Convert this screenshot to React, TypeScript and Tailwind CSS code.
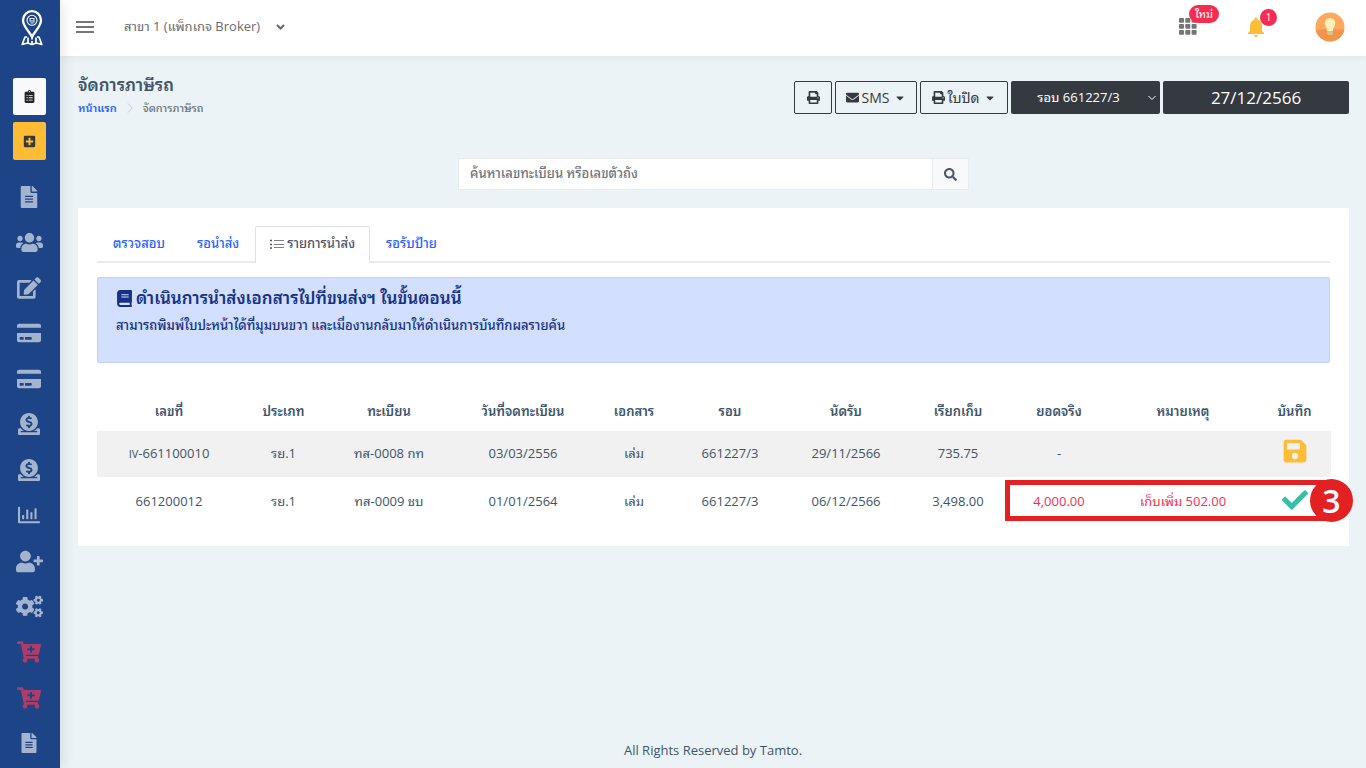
import React from 'react';
import {
  FaFileAlt, FaUsers, FaEdit, FaCreditCard, FaDonate, FaRegChartBar, FaUserPlus, FaCogs, FaCartPlus,
  FaClipboardList, FaPlusSquare, FaPrint, FaEnvelope, FaSearch, FaBook, FaSave, FaCheck, FaCaretDown,
} from 'react-icons/fa';
import { MdNotifications } from 'react-icons/md';

const navItems = [
  { label: 'เอกสาร', Icon: FaFileAlt, size: 22 },
  { label: 'ลูกค้า', Icon: FaUsers, size: 27 },
  { label: 'แก้ไข', Icon: FaEdit, size: 24 },
  { label: 'ชำระเงิน', Icon: FaCreditCard, size: 24 },
  { label: 'บัตร', Icon: FaCreditCard, size: 24 },
  { label: 'รายรับ', Icon: FaDonate, size: 22 },
  { label: 'รายจ่าย', Icon: FaDonate, size: 22 },
  { label: 'สถิติ', Icon: FaRegChartBar, size: 22 },
  { label: 'เพิ่มผู้ใช้', Icon: FaUserPlus, size: 27 },
  { label: 'ตั้งค่า', Icon: FaCogs, size: 27 },
  { label: 'ซื้อแพ็กเกจ', Icon: FaCartPlus, size: 24, danger: true },
  { label: 'ซื้อเพิ่ม', Icon: FaCartPlus, size: 24, danger: true },
  { label: 'รายงาน', Icon: FaFileAlt, size: 20 },
];

const columns = [
  { title: 'เลขที่', width: 'w-[144px]' },
  { title: 'ประเภท', width: 'w-[85px]' },
  { title: 'ทะเบียน', width: 'w-[126px]' },
  { title: 'วันที่จดทะเบียน', width: 'w-[142px]' },
  { title: 'เอกสาร', width: 'w-[80px]' },
  { title: 'รอบ', width: 'w-[112px]' },
  { title: 'นัดรับ', width: 'w-[120px]' },
  { title: 'เรียกเก็บ', width: 'w-[104px]' },
  { title: 'ยอดจริง', width: 'w-[98px]' },
  { title: 'หมายเหตุ', width: 'w-[150px]' },
  { title: 'บันทึก', width: 'w-[73px]' },
];

function Logo() {
  return (
    <svg width="22" height="36" viewBox="0 0 22 36" fill="none" stroke="#fff" strokeWidth="2.300" strokeLinejoin="round" aria-hidden="true">
      <path d="M11 27C8.500 21.500 2 16.500 2 10.200a9 9 0 0 1 18 0C20 16.500 13.500 21.500 11 27Z" />
      <circle cx="11" cy="10.300" r="5" strokeWidth="1.100" />
      <path d="M8.500 8.500h5M9 11h4M9.500 13h3M9 8.500v3M13 8.500v4" strokeWidth="0.900" />
      <path d="M6 27H4L1.200 34.500l5.300-1.500 4.500 1.500 4.500-1.500 5.300 1.500L18 27h-2" strokeWidth="1.700" />
      <path d="M7 27.500V33M15 27.500V33M11 27v2.500M11 31v3" strokeWidth="1.700" />
    </svg>
  );
}

function Avatar() {
  return (
    <svg width="30" height="30" viewBox="0 0 30 30" aria-hidden="true">
      <clipPath id="avatar-clip"><circle cx="15" cy="15" r="14.500" /></clipPath>
      <g clipPath="url(#avatar-clip)">
        <rect width="30" height="30" fill="#ffa75c" />
        <rect y="17.500" width="30" height="13" fill="#f2954c" />
        <path d="M15 6a5.300 5.300 0 0 0-5.300 5.300c0 3 2.500 4.500 2.500 7.700h5.600c0-3.200 2.500-4.700 2.500-7.700A5.300 5.300 0 0 0 15 6Z" fill="#fdf0b8" />
        <rect x="12.200" y="19" width="5.600" height="4" rx="0.800" fill="#ddc383" />
      </g>
    </svg>
  );
}

function Sidebar() {
  return (
    <aside className="z-10 flex w-[60px] shrink-0 flex-col items-center bg-[#1c4487] pr-[2px] pb-[2px] shadow-[1px_0_14px_rgba(0,0,0,0.12)]">
      <a href="#home" aria-label="Tamto" className="mt-[10px] ml-[5px] flex h-9 items-center"><Logo /></a>
      <a href="#tasks" aria-label="รายการงาน" className="mt-8 flex h-[37px] w-[33px] items-center justify-center rounded-xs bg-[#f8f9fa] text-[#212529]">
        <FaClipboardList size={13} />
      </a>
      <a href="#new" aria-label="เพิ่มรายการ" className="mt-[7px] flex h-[38px] w-[33px] items-center justify-center rounded-xs bg-[#ffbc34] text-[#343a40]">
        <FaPlusSquare size={13} />
      </a>
      <nav className="mt-[14px] flex w-full flex-1 flex-col">
        {navItems.map(({ label, Icon, size, danger }) => (
          <a key={label} href="#menu" aria-label={label} className={`flex min-h-10 flex-1 items-center justify-center ${danger ? 'text-[#ad3c68]' : 'text-[#a4b4cf]'}`}>
            <Icon size={size} />
          </a>
        ))}
      </nav>
    </aside>
  );
}

function TopBar() {
  return (
    <header className="flex h-14 items-center bg-white pr-[21px] pb-[3px] pl-4 text-[#6b6b6b] shadow-[0_1px_8px_rgba(0,0,0,0.06)]">
      <button type="button" aria-label="เมนู" className="flex w-[18px] flex-col gap-[3px]">
        <span className="h-[2px] w-full bg-[#757575]" />
        <span className="h-[2px] w-full bg-[#757575]" />
        <span className="h-[2px] w-full bg-[#757575]" />
      </button>
      <button type="button" className="ml-[30px] flex items-center gap-4 text-[13px]">
        สาขา 1 (แพ็กเกจ Broker)
        <svg width="9" height="6" viewBox="0 0 9 6" fill="none" stroke="#666" strokeWidth="2" aria-hidden="true"><path d="M1 1l3.500 3.500L8 1" /></svg>
      </button>
      <div className="ml-auto flex items-center">
        <button type="button" aria-label="แอป ใหม่" className="relative mr-[47px]">
          <svg width="18" height="17" viewBox="0 0 18 17" fill="#757575" aria-hidden="true">
            {[0, 6, 12].map((y) => [0, 6.3, 12.6].map((x) => <rect key={`${x}-${y}`} x={x} y={y} width="5" height="4.800" rx="0.800" />))}
          </svg>
          <span className="absolute -top-[13px] left-[10px] flex h-[18px] w-[30px] items-center justify-center rounded-full bg-[#f62d51] text-[11px] text-white">ใหม่</span>
        </button>
        <button type="button" aria-label="การแจ้งเตือน 1" className="relative mr-[47px] text-[#ffbc34]">
          <MdNotifications size={24} />
          <span className="absolute -top-[6px] left-4 flex size-[17px] items-center justify-center rounded-full bg-[#f62d51] text-[10px] text-white">1</span>
        </button>
        <button type="button" aria-label="บัญชีผู้ใช้"><Avatar /></button>
      </div>
    </header>
  );
}

const outlineButton = 'flex h-[33px] items-center justify-center gap-[3px] rounded-xs border border-[#343a40]';

function PageHeading() {
  return (
    <div className="flex items-start justify-between">
      <div>
        <h1 className="text-[17px] leading-6 font-semibold text-[#3e5569]">จัดการภาษีรถ</h1>
        <nav aria-label="breadcrumb" className="mt-px flex items-center gap-[10px] text-[11px] leading-5 font-medium text-[#6c757d]">
          <a href="#home" className="font-semibold text-[#2962ff]">หน้าแรก</a>
          <svg width="6" height="10" viewBox="0 0 6 10" fill="none" stroke="#c3cbd3" aria-hidden="true"><path d="M1 .5L5.200 5 1 9.500" /></svg>
          <span>จัดการภาษีรถ</span>
        </nav>
      </div>
      <div className="mt-[8px] flex gap-[3px] text-sm text-[#343a40]">
        <button type="button" aria-label="พิมพ์" className={`${outlineButton} w-[38px]`}><FaPrint size={13} /></button>
        <button type="button" className={`${outlineButton} w-[82px]`}>
          <FaEnvelope size={13} />SMS<FaCaretDown size={12} className="ml-[2px]" />
        </button>
        <button type="button" className={`${outlineButton} w-[88px]`}>
          <FaPrint size={13} />ใบปิด<FaCaretDown size={12} className="ml-[2px]" />
        </button>
        <div className="relative">
          <select aria-label="รอบ" className="h-[33px] w-[149px] appearance-none rounded-xs bg-[#343a40] pr-[14px] text-center text-[13px] text-white">
            <option>รอบ 661227/3</option>
          </select>
          <svg className="pointer-events-none absolute top-[14px] right-1" width="8" height="6" viewBox="0 0 8 6" fill="none" stroke="#fff" aria-hidden="true"><path d="M.5 1L4 4.500 7.500 1" /></svg>
        </div>
        <input aria-label="วันที่" defaultValue="27/12/2566" className="h-[33px] w-[186px] rounded-xs bg-[#343a40] text-center text-[17px] text-white" />
      </div>
    </div>
  );
}

const tabClass = 'px-4 text-[13px] font-medium text-[#2962ff]';

function Tabs() {
  return (
    <div role="tablist" className="flex h-[37px] items-stretch border-b-2 border-[#e9ecef]">
      <button type="button" role="tab" aria-selected="false" className={tabClass}>ตรวจสอบ</button>
      <button type="button" role="tab" aria-selected="false" className={tabClass}>รอนำส่ง</button>
      <button type="button" role="tab" aria-selected="true" className="-mb-[2px] flex items-center gap-[3px] rounded-t-xs border border-b-0 border-[#dee2e6] bg-white px-[14px] pb-[2px] text-[13px] font-medium text-[#4f5467]">
        <svg width="14" height="10" viewBox="0 0 14 10" stroke="#7c8090" aria-hidden="true">
          <path d="M0 1.500h2M0 5.500h2M0 9h2" strokeWidth="1.600" stroke="#4f5467" /><path d="M4 1.500h10M4 5.500h10M4 8.500h10" />
        </svg>
        รายการนำส่ง
      </button>
      <button type="button" role="tab" aria-selected="false" className={tabClass}>รอรับป้าย</button>
    </div>
  );
}

function DeliveryTable() {
  return (
    <div className="relative mt-[30px]">
      <table className="w-full table-fixed text-center text-[13px] text-[#3e5569]">
        <thead>
          <tr className="h-[38px]">
            {columns.map((c) => <th key={c.title} className={`${c.width} font-semibold`}>{c.title}</th>)}
          </tr>
        </thead>
        <tbody>
          <tr className="h-[46px] bg-[#f1f1f1]">
            <td><span className="text-[11px]">IV</span>-661100010</td>
            <td>รย.1</td><td>ทส-0008 กท</td><td>03/03/2556</td><td>เล่ม</td><td>661227/3</td><td>29/11/2566</td><td>735.75</td><td>-</td><td />
            <td><button type="button" aria-label="บันทึก" className="-mt-2 align-middle text-[#ffbc34]"><FaSave size={26} /></button></td>
          </tr>
          <tr className="h-[50px]">
            <td>661200012</td>
            <td>รย.1</td><td>ทส-0009 ชบ</td><td>01/01/2564</td><td>เล่ม</td><td>661227/3</td><td>06/12/2566</td><td>3,498.00</td>
            <td className="text-[#f62d51]">4,000.00</td>
            <td className="text-[#f62d51]">เก็บเพิ่ม 502.00</td>
            <td className="text-[#36bea6]"><FaCheck size={26} className="mx-auto -mt-1" role="img" aria-label="บันทึกแล้ว" /></td>
          </tr>
        </tbody>
      </table>
      <div className="absolute right-0 bottom-[6px] h-[41px] w-[325px] border-[5px] border-r-0 border-[#e32123]" />
      <div className="absolute -right-[23px] bottom-[5px] flex size-[43px] items-center justify-center rounded-full bg-[#e32123] text-[32px] leading-none font-semibold text-white">3</div>
    </div>
  );
}

export default function App() {
  return (
    <div className="flex min-h-screen bg-[#ecf3f7] font-['Open_Sans','Noto_Sans_Thai_Looped','Loma','Noto_Sans_Thai',sans-serif]">
      <Sidebar />
      <div className="flex min-w-0 flex-1 flex-col">
        <TopBar />
        <main className="flex-1 pt-[17px] pr-[17px] pl-[18px]">
          <PageHeading />
          <form className="mx-auto mt-10 flex h-8 w-[511px] border border-[#e9ecef]" onSubmit={(e) => e.preventDefault()}>
            <input aria-label="ค้นหา" placeholder="ค้นหาเลขทะเบียน หรือเลขตัวถัง" className="min-w-0 flex-1 bg-white px-[11px] text-[13px] font-medium placeholder:text-[#6c757d]" />
            <button type="submit" aria-label="ค้นหา" className="flex w-9 items-center justify-center border-l border-[#e9ecef] bg-[#f8f9fa] text-[#4f5467]"><FaSearch size={13} /></button>
          </form>
          <section className="mt-[18px] bg-white px-[19px] pt-[18px] pb-[19px]">
            <Tabs />
            <div className="mt-[14px] h-[86px] rounded-xs border border-[#bfd0ff] bg-[#d2dffe] px-[18px] pt-2 text-[#153285]">
              <h2 className="flex items-center gap-[3px] text-[17px] leading-6 font-semibold"><FaBook size={17} />ดำเนินการนำส่งเอกสารไปที่ขนส่งฯ ในขั้นตอนนี้</h2>
              <p className="mt-[5px] text-[13px] leading-5 font-medium">สามารถพิมพ์ใบปะหน้าได้ที่มุมบนขวา และเมื่องานกลับมาให้ดำเนินการบันทึกผลรายคัน</p>
            </div>
            <DeliveryTable />
          </section>
        </main>
        <footer className="pb-2 text-center text-[13px] leading-5 text-[#3e5569]">All Rights Reserved by Tamto.</footer>
      </div>
    </div>
  );
}
